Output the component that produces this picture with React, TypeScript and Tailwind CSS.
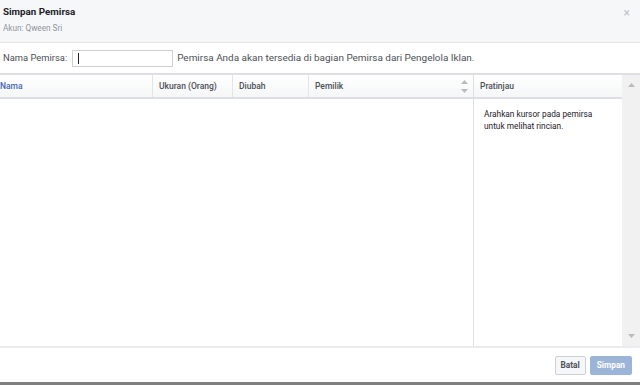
const COLUMNS = [
  { label: 'Nama', width: 'w-[152px]', active: true },
  { label: 'Ukuran (Orang)', width: 'w-[80px]' },
  { label: 'Diubah', width: 'w-[76px]' },
  { label: 'Pemilik', width: 'flex-1' },
];

function Arrow({ down = false }: { down?: boolean }) {
  return (
    <svg width="7" height="4" viewBox="0 0 7 4" className="block">
      <path d={down ? 'M0 0h7L3.5 4z' : 'M3.5 0L7 4H0z'} fill="#b8bbc0" />
    </svg>
  );
}

export default function App() {
  return (
    <div className="flex h-[385px] w-[640px] flex-col bg-white font-['Roboto',sans-serif] text-[#1d2129]">
      {/* header */}
      <div className="relative h-[43px] shrink-0 border-b border-[#e5e5e5] bg-[#f6f7f9] px-[3px] pt-[5px]">
        <div className="text-[9.8px] font-bold leading-[14px] text-[#1d2129]">Simpan Pemirsa</div>
        <div className="mt-[4px] text-[8.2px] leading-[11px] text-[#90949c]">Akun: Qween Sri</div>
        <span className="absolute right-[10px] top-[7px] text-[12px] leading-none text-[#bec2c9]">×</span>
      </div>

      {/* name row */}
      <div className="flex h-[30px] shrink-0 items-center text-[9.4px] text-[#4b4f56]">
        <span className="pl-[3px]">Nama Pemirsa:</span>
        <div className="ml-[5px] flex h-[17px] w-[101px] items-center border border-[#ccd0d5] bg-white pl-[5px]">
          <span className="h-[11px] w-px bg-[#1d2129]" />
        </div>
        <span className="ml-[4px] text-[9.95px]">Pemirsa Anda akan tersedia di bagian Pemirsa dari Pengelola Iklan.</span>
      </div>

      {/* table */}
      <div className="flex h-[275px] shrink-0 border-y-2 border-t-[#dddfe2] border-b-[#e9ebee]">
        <div className="flex w-[473px] flex-col">
          <div className="flex h-[24px] border-b-2 border-[#dddfe2] bg-gradient-to-b from-white to-[#f5f6f7] text-[8.5px] font-medium">
            {COLUMNS.map((c, i) => (
              <div
                key={c.label}
                className={`flex items-center ${c.width} ${i > 0 ? 'border-l border-[#e5e5e5] pl-[6px]' : ''} ${c.active ? 'text-[#4267b2]' : 'text-[#4b4f56]'}`}
              >
                {c.label}
              </div>
            ))}
            <div className="flex w-[18px] flex-col items-center justify-center gap-[5px]">
              <Arrow />
              <Arrow down />
            </div>
          </div>
          <div className="flex-1" />
        </div>

        <div className="flex w-[149px] flex-col border-l border-[#dddfe2]">
          <div className="flex h-[24px] items-center border-b-2 border-[#dddfe2] bg-gradient-to-b from-white to-[#f5f6f7] pl-[6px] text-[8.5px] font-medium text-[#4b4f56]">
            Pratinjau
          </div>
          <div className="max-w-[126px] pl-[10px] pt-[9px] text-[8.3px] leading-[12px] text-[#1d2129]">
            Arahkan kursor pada pemirsa untuk melihat rincian.
          </div>
        </div>

        <div className="flex w-[18px] flex-col items-center justify-between bg-[#f1f1f1] pb-[8px] pt-[8px]">
          <Arrow />
          <Arrow down />
        </div>
      </div>

      {/* footer */}
      <div className="flex flex-1 items-center justify-end gap-[4px] pr-[8px] pt-[1px]">
        <button className="h-[19px] rounded-[2px] border border-[#ccd0d5] bg-[#f6f7f9] px-[5px] text-[8.3px] font-bold text-[#4b4f56]">
          Batal
        </button>
        <button className="h-[19px] rounded-[2px] border border-[#9cb4d8] bg-[#9cb4d8] px-[6px] text-[8.3px] font-bold text-white">
          Simpan
        </button>
      </div>
      <div className="h-[3px] shrink-0 bg-[#7f7f7f]" />
    </div>
  );
}
